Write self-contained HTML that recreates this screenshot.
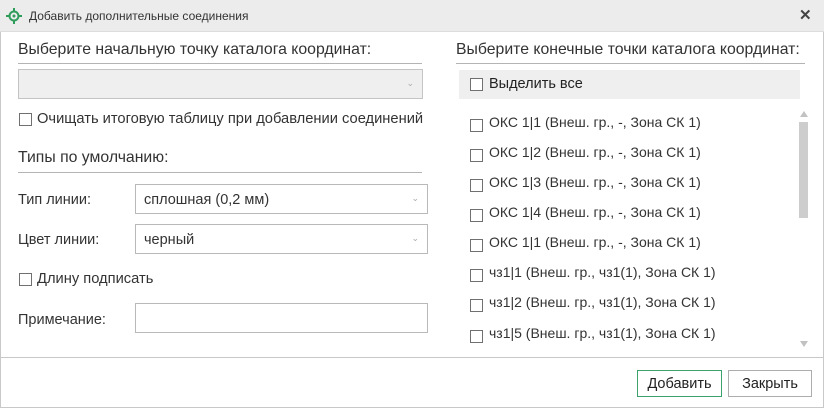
<!DOCTYPE html>
<html><head><meta charset="utf-8"><style>
*{box-sizing:border-box;margin:0;padding:0}
body{width:824px;height:408px;overflow:hidden;background:#fff;font-family:"Segoe UI","Liberation Sans",sans-serif;color:#222;position:relative}
.a{position:absolute}
.win{left:0;top:0;width:824px;height:408px;border:1px solid #c8c8c8}
.title{left:0;top:0;width:824px;height:32px;background:#ececec;border-bottom:1px solid #dcdcdc}
.t{font-size:12px;white-space:nowrap}
.l{font-size:14.5px;white-space:nowrap;color:#333}
.h{font-size:15.8px;white-space:nowrap;color:#333}
.it{font-size:14px;white-space:nowrap;color:#333}
.hr{height:1px;background:#b4b4b4}
.cb{width:13px;height:13px;border:1px solid #707070;background:#fff}
.combo{border:1px solid #b9b9b9;background:#fff;height:30px}
.combo .arr{position:absolute;right:8px;top:8px;font-size:9px;color:#aaa}
.btn{border:1px solid #adadad;background:#fff;font-size:14.5px;text-align:center;line-height:26px;height:27px}
</style></head><body>
<div class="a win"></div>
<div class="a title"></div>
<svg class="a" style="left:5px;top:7px" width="18" height="18" viewBox="0 0 18 18"><circle cx="9" cy="9" r="4.5" fill="none" stroke="#2e9d5c" stroke-width="2"/><circle cx="9" cy="9" r="1.5" fill="#2e9d5c"/><path d="M9 1v4M9 13v4M1 9h4M13 9h4" stroke="#2e9d5c" stroke-width="2"/></svg>
<div class="a t" style="left:29px;top:9px;color:#333">Добавить дополнительные соединения</div>
<div class="a" style="left:799px;top:6px;font-size:15px;font-weight:bold;color:#444">✕</div>

<div class="a h" style="left:18px;top:41px">Выберите начальную точку каталога координат:</div>
<div class="a hr" style="left:18px;top:63px;width:404px"></div>
<div class="a combo" style="left:18px;top:69px;width:405px;background:#efefef;border-color:#c4c4c4"><span class="arr">&#8964;</span></div>
<div class="a cb" style="left:19px;top:113px"></div>
<div class="a" style="left:37px;top:111px;font-size:14.7px;white-space:nowrap;color:#333">Очищать итоговую таблицу при добавлении соединений</div>

<div class="a h" style="left:18px;top:149px">Типы по умолчанию:</div>
<div class="a hr" style="left:18px;top:172px;width:404px"></div>
<div class="a l" style="left:18px;top:192px">Тип линии:</div>
<div class="a combo" style="left:135px;top:184px;width:293px"><span class="a l" style="left:8px;top:7px">сплошная (0,2 мм)</span><span class="arr">&#8964;</span></div>
<div class="a l" style="left:18px;top:232px">Цвет линии:</div>
<div class="a combo" style="left:135px;top:224px;width:293px"><span class="a l" style="left:8px;top:7px">черный</span><span class="arr">&#8964;</span></div>
<div class="a cb" style="left:19px;top:273px"></div>
<div class="a" style="left:37px;top:271px;font-size:14.7px;white-space:nowrap;color:#333">Длину подписать</div>
<div class="a l" style="left:18px;top:312px">Примечание:</div>
<div class="a combo" style="left:135px;top:303px;width:293px"></div>

<div class="a h" style="left:456px;top:41px">Выберите конечные точки каталога координат:</div>
<div class="a hr" style="left:456px;top:63px;width:349px"></div>
<div class="a" style="left:459px;top:70px;width:341px;height:29px;background:#efefef"></div>
<div class="a cb" style="left:470px;top:78px"></div>
<div class="a l" style="left:489px;top:76px;color:#222">Выделить все</div>

<div class="a" style="left:456px;top:104px;width:352px;height:244px;overflow:hidden">
<div class="a cb" style="left:14px;top:15px"></div><div class="a it" style="left:33px;top:10px">ОКС 1|1 (Внеш. гр., -, Зона СК 1)</div>
<div class="a cb" style="left:14px;top:45px"></div><div class="a it" style="left:33px;top:40px">ОКС 1|2 (Внеш. гр., -, Зона СК 1)</div>
<div class="a cb" style="left:14px;top:75px"></div><div class="a it" style="left:33px;top:70px">ОКС 1|3 (Внеш. гр., -, Зона СК 1)</div>
<div class="a cb" style="left:14px;top:105px"></div><div class="a it" style="left:33px;top:100px">ОКС 1|4 (Внеш. гр., -, Зона СК 1)</div>
<div class="a cb" style="left:14px;top:135px"></div><div class="a it" style="left:33px;top:130px">ОКС 1|1 (Внеш. гр., -, Зона СК 1)</div>
<div class="a cb" style="left:14px;top:165px"></div><div class="a it" style="left:33px;top:160px">чз1|1 (Внеш. гр., чз1(1), Зона СК 1)</div>
<div class="a cb" style="left:14px;top:195px"></div><div class="a it" style="left:33px;top:190px">чз1|2 (Внеш. гр., чз1(1), Зона СК 1)</div>
<div class="a cb" style="left:14px;top:226px"></div><div class="a it" style="left:33px;top:221px">чз1|5 (Внеш. гр., чз1(1), Зона СК 1)</div>
</div>
<svg class="a" style="left:799px;top:110px" width="10" height="8"><path d="M1 7L5 1L9 7Z" fill="#c2c2c2"/></svg>
<div class="a" style="left:799px;top:122px;width:9px;height:96px;background:#cdcdcd"></div>
<svg class="a" style="left:799px;top:340px" width="10" height="8"><path d="M1 1L5 7L9 1Z" fill="#c2c2c2"/></svg>

<div class="a hr" style="left:1px;top:357px;width:822px;background:#c8c8c8"></div>
<div class="a btn" style="left:637px;top:370px;width:85px;border-color:#3aa26a">Добавить</div>
<div class="a btn" style="left:728px;top:370px;width:84px">Закрыть</div>
</body></html>
